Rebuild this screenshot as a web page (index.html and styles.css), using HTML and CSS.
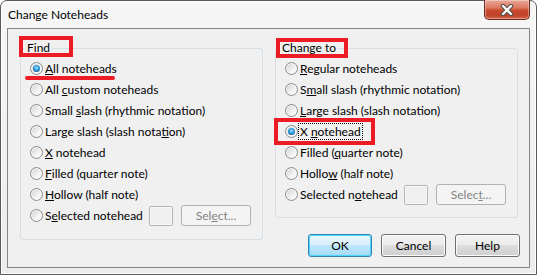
FILE: index.html
```html
<!DOCTYPE html>
<html lang="en">
<head>
  <meta charset="UTF-8" />
  <title>Change Noteheads</title>
  <link rel="stylesheet" href="styles.css">
</head>
<body>
  <div class="window">
    <div class="titlebar">
      <span class="title">Change Noteheads</span>
      <div class="close">
        <svg width="14" height="12" viewBox="0 0 14 12">
          <path d="M3 2 L11 10 M11 2 L3 10" stroke="#4a4a4a" stroke-width="4.4" stroke-linecap="round"/>
          <path d="M3 2 L11 10 M11 2 L3 10" stroke="#fff" stroke-width="2.4" stroke-linecap="round"/>
        </svg>
      </div>
    </div>

    <div class="client">
      <fieldset class="group find">
        <legend>Find</legend>
        <div class="opt"><span class="radio checked"></span><span><u>A</u>ll noteheads</span></div>
        <div class="opt"><span class="radio"></span><span>All <u>c</u>ustom noteheads</span></div>
        <div class="opt"><span class="radio"></span><span>Small <u>s</u>lash (rhythmic notation)</span></div>
        <div class="opt"><span class="radio"></span><span>Large slash (slash nota<u>t</u>ion)</span></div>
        <div class="opt"><span class="radio"></span><span><u>X</u> notehead</span></div>
        <div class="opt"><span class="radio"></span><span><u>F</u>illed (quarter note)</span></div>
        <div class="opt"><span class="radio"></span><span><u>H</u>ollow (half note)</span></div>
        <div class="opt">
          <span class="radio"></span><span class="pick-label">S<u>e</u>lected notehead</span>
          <span class="swatch"></span>
          <button class="btn pick" disabled>Sel<u>e</u>ct...</button>
        </div>
      </fieldset>

      <div class="side">
        <fieldset class="group change">
          <legend>Change to</legend>
          <div class="opt"><span class="radio"></span><span><u>R</u>egular noteheads</span></div>
          <div class="opt"><span class="radio"></span><span>S<u>m</u>all slash (rhythmic notation)</span></div>
          <div class="opt"><span class="radio"></span><span><u>L</u>arge slash (slash notation)</span></div>
          <div class="opt"><span class="radio checked"></span><span class="focus">X <u>n</u>otehead</span></div>
          <div class="opt"><span class="radio"></span><span>Filled (<u>q</u>uarter note)</span></div>
          <div class="opt"><span class="radio"></span><span>Hollo<u>w</u> (half note)</span></div>
          <div class="opt">
            <span class="radio"></span><span class="pick-label">Selected n<u>o</u>tehead</span>
            <span class="swatch"></span>
            <button class="btn pick" disabled>Selec<u>t</u>...</button>
          </div>
        </fieldset>

        <div class="actions">
          <button class="btn default ok">OK</button>
          <button class="btn">Cancel</button>
          <button class="btn">Help</button>
        </div>
      </div>
    </div>

    <div class="mark box-find"></div>
    <div class="mark line-all"></div>
    <div class="mark box-change"></div>
    <div class="mark box-x"></div>
  </div>
</body>
</html>
```

FILE: styles.css
```css
body {
  margin: 0;
  font-family: Lato, 'Open Sans', sans-serif;
  font-size: 12px;
  color: #000;
}
.window {
  position: relative;
  width: 537px;
  height: 275px;
  box-sizing: border-box;
  border: 1px solid #5a5a5a;
  border-radius: 7px 7px 0 0;
  background: linear-gradient(#f6f6f6, #ececec);
  box-shadow: inset 1px 1px 0 #fff, inset -1px -1px 0 #fff;
}
.titlebar {
  display: flex;
  height: 27px;
}
.title {
  padding: 6px 0 0 7px;
  line-height: 16px;
}
.close {
  margin: -1px 6px 0 auto;
  width: 46px;
  height: 20px;
  box-sizing: border-box;
  border: 1px solid #6b2a1e;
  border-top: none;
  border-radius: 0 0 5px 5px;
  background: linear-gradient(#e9a897 0%, #dc7a62 40%, #c84a2e 55%, #c0432a 80%, #d9664a 100%);
  box-shadow: inset 0 0 0 1px rgba(255, 255, 255, 0.35);
  display: flex;
  align-items: center;
  justify-content: center;
}
.client {
  display: flex;
  gap: 12px;
  height: 240px;
  box-sizing: border-box;
  margin: 0 6px;
  padding: 11px 9px 0 12px;
  border: 1px solid #858585;
  background: #f0f0f0;
}
.group {
  margin: 0;
  width: 243px;
  box-sizing: border-box;
  padding: 2px 0 0 9px;
  border: 1px solid #d5dfe5;
  border-radius: 3px;
}
.group legend {
  margin-left: -5px;
  padding: 0 2px;
  line-height: 16px;
}
.find {
  padding-bottom: 13px;
  align-self: flex-start;
}
.change {
  padding-bottom: 12px;
}
.side {
  flex: 1;
  display: flex;
  flex-direction: column;
}
.opt {
  display: flex;
  align-items: center;
  height: 21px;
  white-space: nowrap;
}
.radio {
  position: relative;
  flex: none;
  width: 13px;
  height: 13px;
  box-sizing: border-box;
  margin-right: 2px;
  border: 1px solid #8c8c8c;
  border-radius: 50%;
  background: linear-gradient(135deg, #cfcfcf, #f3f3f3 60%, #fdfdfd);
  box-shadow: inset 0 0 0 1px #f5f5f5;
}
.radio.checked::after {
  content: "";
  position: absolute;
  left: 2px;
  top: 2px;
  width: 7px;
  height: 7px;
  border-radius: 50%;
  background: radial-gradient(circle at 50% 40%, #9be2ff 0, #2f9ce2 45%, #0d4a80 90%);
}
.focus {
  outline: 1px dotted #000;
  padding: 0 1px;
  margin-left: -1px;
}
.pick-label {
  width: 104px;
}
.swatch {
  width: 24px;
  height: 20px;
  box-sizing: border-box;
  border: 1px solid #b4b4b4;
  border-radius: 2px;
  box-shadow: inset 0 0 0 1px #f8f8f8;
}
.btn {
  width: 65px;
  height: 23px;
  padding: 0;
  border: 1px solid #707070;
  border-radius: 3px;
  background: linear-gradient(#f2f2f2 0%, #ebebeb 49%, #dddddd 50%, #cfcfcf 100%);
  box-shadow: inset 0 0 0 1px #fbfbfb;
  font: inherit;
  color: #000;
}
.btn.pick {
  width: 70px;
  height: 21px;
  margin-left: 8px;
  border-color: #adb2b5;
  background: #f4f4f4;
  box-shadow: none;
  color: #838383;
}
.btn.default {
  border-color: #3c7fb1;
  background: linear-gradient(#eaf6fd 0%, #d9f0fc 49%, #bee6fd 50%, #a7d9f5 100%);
  box-shadow: inset 0 0 0 1px #48d8fb;
}
.ok {
  width: 64px;
}
.actions {
  display: flex;
  justify-content: flex-end;
  gap: 9px;
  margin-top: 16px;
}

/* red annotation marks over the dialog */
.mark {
  position: absolute;
  box-sizing: border-box;
  border: 4px solid #ed1c24;
}
.box-find {
  left: 18px;
  top: 35px;
  width: 54px;
  height: 21px;
}
.line-all {
  left: 24px;
  top: 75px;
  width: 90px;
  height: 4px;
  border: none;
  border-radius: 2px;
  background: #ed1c24;
}
.box-change {
  left: 275px;
  top: 37px;
  width: 72px;
  height: 20px;
}
.box-x {
  left: 273px;
  top: 117px;
  width: 101px;
  height: 27px;
}
```
